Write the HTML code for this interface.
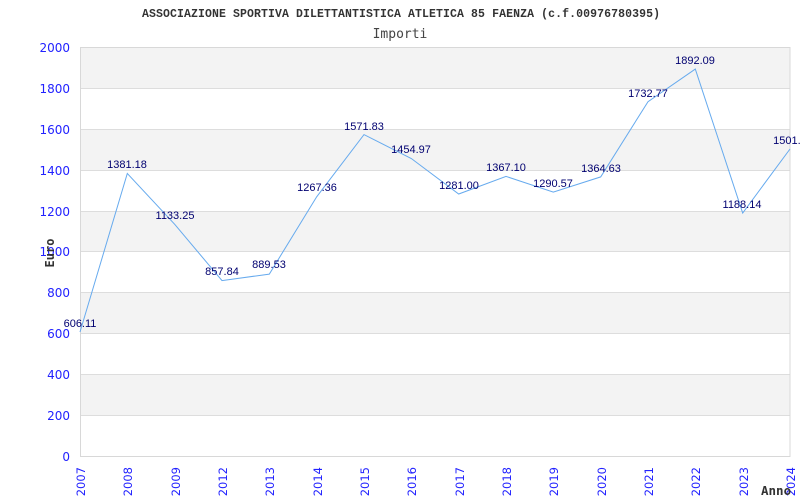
<!DOCTYPE html>
<html><head><meta charset="utf-8"><style>
html,body{margin:0;padding:0;background:#fff;width:800px;height:500px;overflow:hidden}
svg{display:block}
</style></head><body>
<svg width="800" height="500" xmlns="http://www.w3.org/2000/svg">
<rect width="800" height="500" fill="#fff"/>
<text x="142" y="17" textLength="518" lengthAdjust="spacing" font-family="Liberation Mono, DejaVu Sans Mono, monospace" font-weight="bold" font-size="11.5" fill="#333">ASSOCIAZIONE SPORTIVA DILETTANTISTICA ATLETICA 85 FAENZA (c.f.00976780395)</text>
<text x="400" y="38" text-anchor="middle" font-family="DejaVu Sans Mono, monospace" font-size="13" fill="#444">Importi</text>
<g fill="#f3f3f3">
<rect x="80" y="47" width="710" height="41"/>
<rect x="80" y="129" width="710" height="41"/>
<rect x="80" y="211" width="710" height="41"/>
<rect x="80" y="292" width="710" height="41"/>
<rect x="80" y="374" width="710" height="41"/>
</g>
<g stroke="#ddd" stroke-width="1">
<line x1="80" y1="88.5" x2="790" y2="88.5"/><line x1="80" y1="129.5" x2="790" y2="129.5"/>
<line x1="80" y1="170.5" x2="790" y2="170.5"/><line x1="80" y1="211.5" x2="790" y2="211.5"/>
<line x1="80" y1="251.5" x2="790" y2="251.5"/><line x1="80" y1="292.5" x2="790" y2="292.5"/>
<line x1="80" y1="333.5" x2="790" y2="333.5"/><line x1="80" y1="374.5" x2="790" y2="374.5"/>
<line x1="80" y1="415.5" x2="790" y2="415.5"/>
</g>
<rect x="80.5" y="47.5" width="709.5" height="409" fill="none" stroke="#d8d8d8"/>
<g font-family="DejaVu Sans, sans-serif" font-size="12" fill="#2222ff" text-anchor="end">
<text x="70" y="52">2000</text><text x="70" y="93">1800</text><text x="70" y="134">1600</text>
<text x="70" y="175">1400</text><text x="70" y="216">1200</text><text x="70" y="256">1000</text>
<text x="70" y="297">800</text><text x="70" y="338">600</text><text x="70" y="379">400</text>
<text x="70" y="420">200</text><text x="70" y="461">0</text>
</g>
<text transform="translate(54,253) rotate(-90)" text-anchor="middle" font-family="DejaVu Sans Mono, monospace" font-weight="bold" font-size="12" fill="#333">Euro</text>
<g font-family="DejaVu Sans, sans-serif" font-size="11.5" fill="#2222ff" text-anchor="end">
<text transform="translate(85,467) rotate(-90)">2007</text>
<text transform="translate(132,467) rotate(-90)">2008</text>
<text transform="translate(180,467) rotate(-90)">2009</text>
<text transform="translate(227,467) rotate(-90)">2012</text>
<text transform="translate(274,467) rotate(-90)">2013</text>
<text transform="translate(322,467) rotate(-90)">2014</text>
<text transform="translate(369,467) rotate(-90)">2015</text>
<text transform="translate(416,467) rotate(-90)">2016</text>
<text transform="translate(464,467) rotate(-90)">2017</text>
<text transform="translate(511,467) rotate(-90)">2018</text>
<text transform="translate(558,467) rotate(-90)">2019</text>
<text transform="translate(606,467) rotate(-90)">2020</text>
<text transform="translate(653,467) rotate(-90)">2021</text>
<text transform="translate(700,467) rotate(-90)">2022</text>
<text transform="translate(748,467) rotate(-90)">2023</text>
<text transform="translate(795,467) rotate(-90)">2024</text>
</g>
<text x="761" y="495" font-family="DejaVu Sans Mono, monospace" font-weight="bold" font-size="12.5" fill="#333">Anno</text>
<polyline fill="none" stroke="#66aaee" stroke-width="1" points="80,332 127.3,173.5 174.7,224.3 222,280.6 269.3,274.1 316.7,196.8 364,134.6 411.3,158.5 458.7,194 506,176.4 553.3,192.1 600.7,176.9 648,101.7 695.3,69.1 742.7,213 790,149"/>
<g font-family="Liberation Sans, Arial, sans-serif" font-size="11" fill="#000070" text-anchor="middle">
<text x="80" y="327">606.11</text>
<text x="127" y="168">1381.18</text>
<text x="175" y="219">1133.25</text>
<text x="222" y="275">857.84</text>
<text x="269" y="268">889.53</text>
<text x="317" y="191">1267.36</text>
<text x="364" y="130">1571.83</text>
<text x="411" y="153">1454.97</text>
<text x="459" y="189">1281.00</text>
<text x="506" y="171">1367.10</text>
<text x="553" y="187">1290.57</text>
<text x="601" y="172">1364.63</text>
<text x="648" y="97">1732.77</text>
<text x="695" y="64">1892.09</text>
<text x="742" y="208">1188.14</text>
<text x="790" y="144">1501.4</text>
</g>
</svg>
</body></html>
